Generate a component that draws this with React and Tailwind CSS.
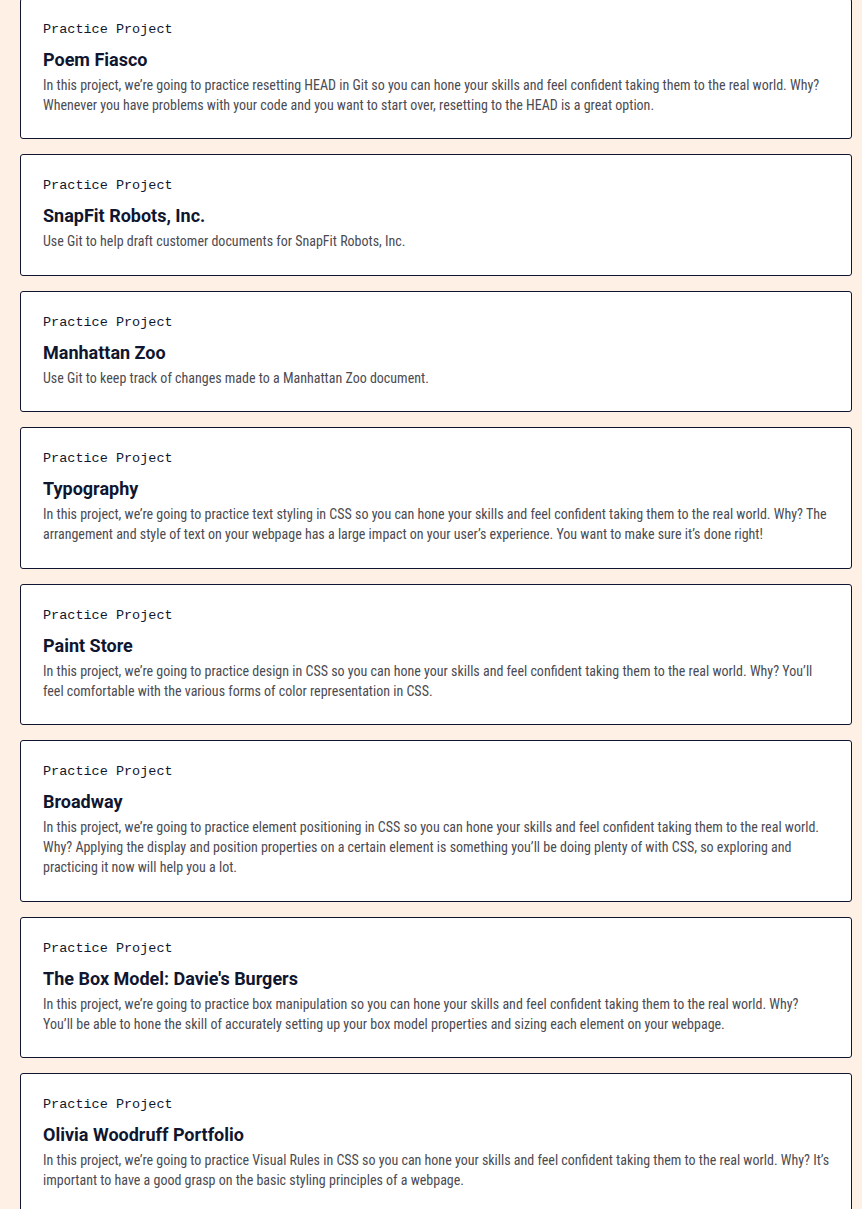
const projects = [
  {
    title: "Poem Fiasco",
    text: "In this project, we’re going to practice resetting HEAD in Git so you can hone your skills and feel confident taking them to the real world. Why? Whenever you have problems with your code and you want to start over, resetting to the HEAD is a great option.",
  },
  {
    title: "SnapFit Robots, Inc.",
    text: "Use Git to help draft customer documents for SnapFit Robots, Inc.",
  },
  {
    title: "Manhattan Zoo",
    text: "Use Git to keep track of changes made to a Manhattan Zoo document.",
  },
  {
    title: "Typography",
    text: "In this project, we’re going to practice text styling in CSS so you can hone your skills and feel confident taking them to the real world. Why? The arrangement and style of text on your webpage has a large impact on your user’s experience. You want to make sure it’s done right!",
  },
  {
    title: "Paint Store",
    text: "In this project, we’re going to practice design in CSS so you can hone your skills and feel confident taking them to the real world. Why? You’ll feel comfortable with the various forms of color representation in CSS.",
  },
  {
    title: "Broadway",
    text: "In this project, we’re going to practice element positioning in CSS so you can hone your skills and feel confident taking them to the real world. Why? Applying the display and position properties on a certain element is something you’ll be doing plenty of with CSS, so exploring and practicing it now will help you a lot.",
  },
  {
    title: "The Box Model: Davie's Burgers",
    text: "In this project, we’re going to practice box manipulation so you can hone your skills and feel confident taking them to the real world. Why? You’ll be able to hone the skill of accurately setting up your box model properties and sizing each element on your webpage.",
  },
  {
    title: "Olivia Woodruff Portfolio",
    text: "In this project, we’re going to practice Visual Rules in CSS so you can hone your skills and feel confident taking them to the real world. Why? It’s important to have a good grasp on the basic styling principles of a webpage.",
  },
];

function ProjectCard({ title, text }) {
  return (
    <div className="rounded-[3px] border border-[#10162f] bg-white pl-[22px] pr-[21px] pt-[22px] pb-[23.5px]">
      <p className="font-['Liberation_Mono',monospace] text-[13.5px] leading-[18px] text-[#10162f]">
        Practice Project
      </p>
      <h3 className="mt-[9px] font-['Roboto',sans-serif] text-[18px] font-bold leading-[24px] text-[#10162f]">
        {title}
      </h3>
      <p className="mt-[3px] font-['Roboto',sans-serif] text-[14px] leading-[20px] text-[#4b4b52] [font-stretch:condensed]">
        {text}
      </p>
    </div>
  );
}

export default function App() {
  return (
    <div className="min-h-screen overflow-hidden bg-[#fff0e5]">
      <div className="-mt-[2.5px] ml-[20px] flex w-[832px] flex-col gap-[15px] pb-8">
        {projects.map((p) => (
          <ProjectCard key={p.title} {...p} />
        ))}
      </div>
    </div>
  );
}
